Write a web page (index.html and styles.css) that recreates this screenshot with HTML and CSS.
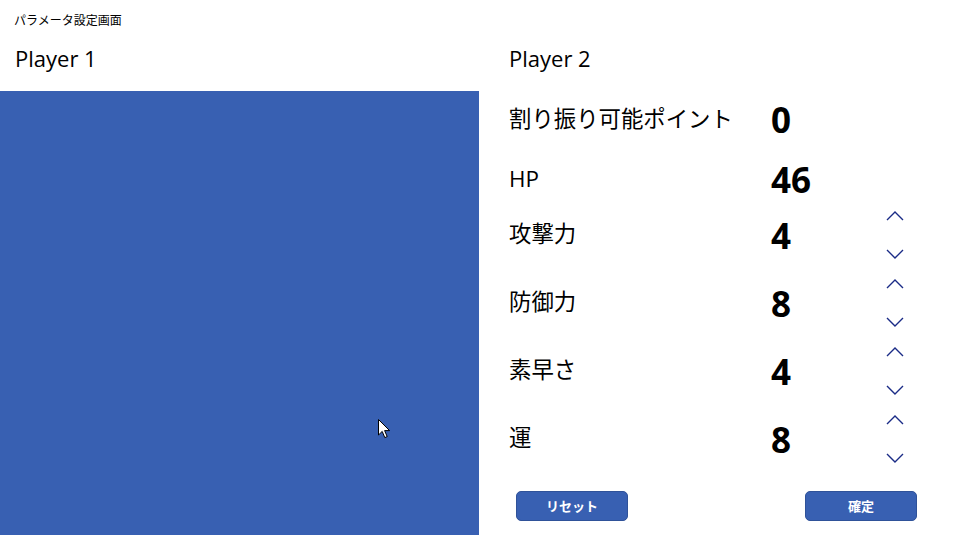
FILE: index.html
```html
<!DOCTYPE html>
<html lang="ja">
<head>
<meta charset="utf-8">
<title>パラメータ設定画面</title>
<link rel="stylesheet" href="styles.css">
</head>
<body>
<div class="app">
  <div class="title">パラメータ設定画面</div>
  <div class="board">
    <section class="player player-1">
      <h2 class="player-name">Player 1</h2>
      <div class="canvas">
        <svg class="cursor" width="13" height="20" viewBox="0 0 13 20" aria-hidden="true">
          <path d="M0.5 0.5 L0.5 16 L4.2 12.4 L6.8 18.6 L9.2 17.6 L6.6 11.6 L11.6 11.6 Z" fill="#fff" stroke="#000" stroke-width="1" stroke-linejoin="miter"/>
        </svg>
      </div>
    </section>
    <section class="player player-2">
      <h2 class="player-name">Player 2</h2>
      <div class="stats">
        <div class="stat stat-points">
          <span class="stat-label">割り振り可能ポイント</span>
          <span class="stat-value">0</span>
        </div>
        <div class="stat stat-hp">
          <span class="stat-label">HP</span>
          <span class="stat-value">46</span>
        </div>
        <div class="stat stat-adjust">
          <span class="stat-label">攻撃力</span>
          <span class="stat-value">4</span>
          <div class="stepper">
            <svg class="chev" width="18" height="10" viewBox="0 0 18 10"><polyline points="1,9 9,1 17,9"/></svg>
            <svg class="chev" width="18" height="10" viewBox="0 0 18 10"><polyline points="1,1 9,9 17,1"/></svg>
          </div>
        </div>
        <div class="stat stat-adjust">
          <span class="stat-label">防御力</span>
          <span class="stat-value">8</span>
          <div class="stepper">
            <svg class="chev" width="18" height="10" viewBox="0 0 18 10"><polyline points="1,9 9,1 17,9"/></svg>
            <svg class="chev" width="18" height="10" viewBox="0 0 18 10"><polyline points="1,1 9,9 17,1"/></svg>
          </div>
        </div>
        <div class="stat stat-adjust">
          <span class="stat-label">素早さ</span>
          <span class="stat-value">4</span>
          <div class="stepper">
            <svg class="chev" width="18" height="10" viewBox="0 0 18 10"><polyline points="1,9 9,1 17,9"/></svg>
            <svg class="chev" width="18" height="10" viewBox="0 0 18 10"><polyline points="1,1 9,9 17,1"/></svg>
          </div>
        </div>
        <div class="stat stat-adjust">
          <span class="stat-label">運</span>
          <span class="stat-value">8</span>
          <div class="stepper">
            <svg class="chev" width="18" height="10" viewBox="0 0 18 10"><polyline points="1,9 9,1 17,9"/></svg>
            <svg class="chev" width="18" height="10" viewBox="0 0 18 10"><polyline points="1,1 9,9 17,1"/></svg>
          </div>
        </div>
      </div>
      <div class="actions">
        <button class="btn" type="button">リセット</button>
        <button class="btn" type="button">確定</button>
      </div>
    </section>
  </div>
</div>
</body>
</html>
```

FILE: styles.css
```css
* { box-sizing: border-box; }

html, body {
  margin: 0;
  padding: 0;
  background: #fff;
}

body {
  width: 955px;
  height: 535px;
  overflow: hidden;
  font-family: "Open Sans", "Noto Sans CJK JP", sans-serif;
  color: #000;
}

.app {
  display: flex;
  flex-direction: column;
  height: 535px;
}

.title {
  padding: 13px 14px 0;
  font-size: 12px;
  line-height: 16px;
  height: 28px;
}

.board {
  flex: 1;
  display: grid;
  grid-template-columns: 479px 1fr;
  min-height: 0;
}

.player {
  display: flex;
  flex-direction: column;
  min-height: 0;
}

.player-name {
  margin: 0;
  height: 63px;
  padding-top: 15px;
  font-size: 22px;
  font-weight: 400;
  line-height: 30px;
}

.player-1 .player-name { padding-left: 15px; }
.player-2 { padding-left: 30px; }

.canvas {
  flex: 1;
  background: #3860b2;
  position: relative;
}

.cursor {
  position: absolute;
  left: 378px;
  top: 328px;
}

.stats {
  display: flex;
  flex-direction: column;
}

.stat {
  display: grid;
  grid-template-columns: 262px 115px 18px;
  align-items: center;
}

.stat-points { height: 56px; }
.stat-hp { height: 54px; padding-top: 10px; }
.stat-adjust { height: 68px; }

.stat-label {
  font-size: 22.4px;
  line-height: 30px;
  white-space: nowrap;
}

.stat-value {
  font-size: 35px;
  font-weight: 700;
  line-height: 40px;
  padding-top: 1px;
}

.stat-adjust .stat-label { margin-top: -2px; }

.stepper {
  display: flex;
  flex-direction: column;
  gap: 28px;
}

.chev {
  display: block;
}

.chev polyline {
  fill: none;
  stroke: #1a2b86;
  stroke-width: 1.4;
}

.actions {
  display: flex;
  justify-content: space-between;
  padding: 18px 38px 0 7px;
}

.btn {
  width: 112px;
  height: 30px;
  margin: 0;
  padding: 0;
  border: 1px solid #2f5299;
  border-radius: 5px;
  background: #3860b2;
  color: #fff;
  font-family: "Open Sans", "Noto Sans CJK JP", sans-serif;
  font-size: 13px;
  font-weight: 700;
  line-height: 28px;
}
```
